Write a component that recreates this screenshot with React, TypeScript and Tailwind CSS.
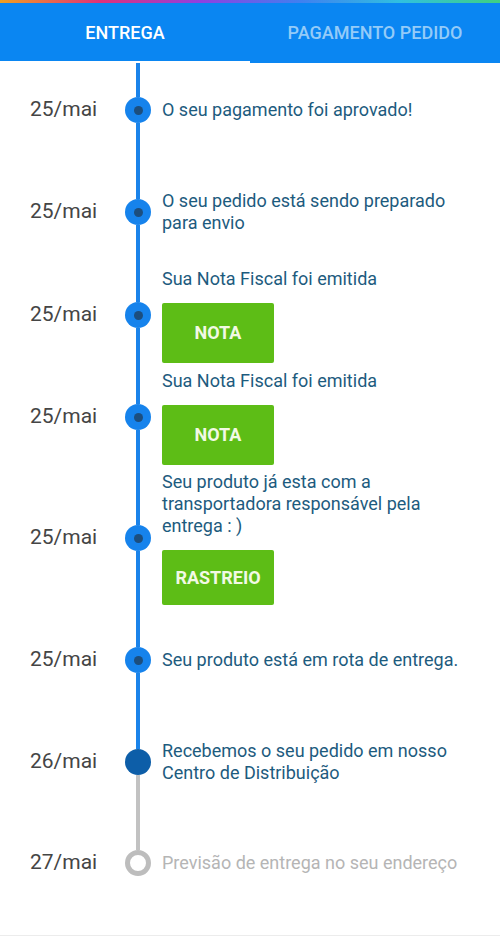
import React from "react";

type Item = {
  date: string;
  h: number;
  lines: string[];
  button?: string;
  kind: "done" | "current" | "future";
  topColor: string;
  bottomColor: string | null;
};

const BLUE = "#1a83ea";
const GRAY = "#c2c2c2";

const items: Item[] = [
  { date: "25/mai", h: 94, lines: ["O seu pagamento foi aprovado!"], kind: "done", topColor: BLUE, bottomColor: BLUE },
  { date: "25/mai", h: 110, lines: ["O seu pedido está sendo preparado", "para envio"], kind: "done", topColor: BLUE, bottomColor: BLUE },
  { date: "25/mai", h: 96, lines: ["Sua Nota Fiscal foi emitida"], button: "NOTA", kind: "done", topColor: BLUE, bottomColor: BLUE },
  { date: "25/mai", h: 108, lines: ["Sua Nota Fiscal foi emitida"], button: "NOTA", kind: "done", topColor: BLUE, bottomColor: BLUE },
  { date: "25/mai", h: 134, lines: ["Seu produto já esta com a", "transportadora responsável pela", "entrega : )"], button: "RASTREIO", kind: "done", topColor: BLUE, bottomColor: BLUE },
  { date: "25/mai", h: 110, lines: ["Seu produto está em rota de entrega."], kind: "done", topColor: BLUE, bottomColor: BLUE },
  { date: "26/mai", h: 94, lines: ["Recebemos o seu pedido em nosso", "Centro de Distribuição"], kind: "current", topColor: BLUE, bottomColor: GRAY },
  { date: "27/mai", h: 108, lines: ["Previsão de entrega no seu endereço"], kind: "future", topColor: GRAY, bottomColor: null },
];

function Dot({ kind }: { kind: Item["kind"] }) {
  if (kind === "done")
    return (
      <div className="w-[26px] h-[26px] rounded-full bg-[#1683ec] flex items-center justify-center shrink-0">
        <div className="w-[9px] h-[9px] rounded-full bg-[#1c4e7e]" />
      </div>
    );
  if (kind === "current")
    return <div className="w-[26px] h-[26px] rounded-full bg-[#0d5ea8] shrink-0" />;
  return <div className="w-[26px] h-[26px] rounded-full border-[5px] border-[#bdbdbd] bg-white shrink-0" />;
}

export default function App() {
  return (
    <div className="w-[500px] h-[946px] bg-white flex flex-col" style={{ fontFamily: "Roboto, 'Liberation Sans', sans-serif" }}>
      <div className="h-[3px] bg-[linear-gradient(90deg,#f0a020,#e0307a,#9040e0,#4080f0,#30c0e0,#40d080)]" />
      <div className="h-[60px] bg-[#0a86f2] flex">
        <div className="w-[250px] flex flex-col">
          <div className="flex-1 flex items-center justify-center text-white text-[18px] font-medium">ENTREGA</div>
          <div className="h-[2px] bg-white" />
        </div>
        <div className="w-[250px] flex items-center justify-center text-[#94cbf8] text-[18px] font-medium pb-[2px]">PAGAMENTO PEDIDO</div>
      </div>
      <div className="flex flex-col">
        {items.map((it, i) => (
          <div key={i} className="flex items-stretch" style={{ height: it.h }}>
            <div className="w-[125px] pl-[30px] flex items-center text-[21px] text-[#454545]">{it.date}</div>
            <div className="w-[26px] flex flex-col items-center">
              <div className="flex-1 w-[4px]" style={{ background: it.topColor }} />
              <Dot kind={it.kind} />
              <div className="flex-1 w-[4px]" style={{ background: it.bottomColor ?? "transparent" }} />
            </div>
            <div className="flex-1 pl-[11px] flex flex-col justify-center">
              <div className={`text-[18px] leading-[22px] ${it.kind === "future" ? "text-[#b5b5b5]" : "text-[#1d5b7e]"}`}>
                {it.lines.map((l, j) => (
                  <div key={j} className="whitespace-nowrap">{l}</div>
                ))}
              </div>
              {it.button && (
                <div className="mt-[13px] w-[112px] h-[60px] rounded-[2px] bg-[#5dbd16] flex items-center justify-center text-[#f2f9e4] text-[18px] font-bold">
                  {it.button}
                </div>
              )}
            </div>
          </div>
        ))}
      </div>
      <div className="flex-1" />
      <div className="h-[1px] bg-[#ececec] mb-[10px]" />
    </div>
  );
}
